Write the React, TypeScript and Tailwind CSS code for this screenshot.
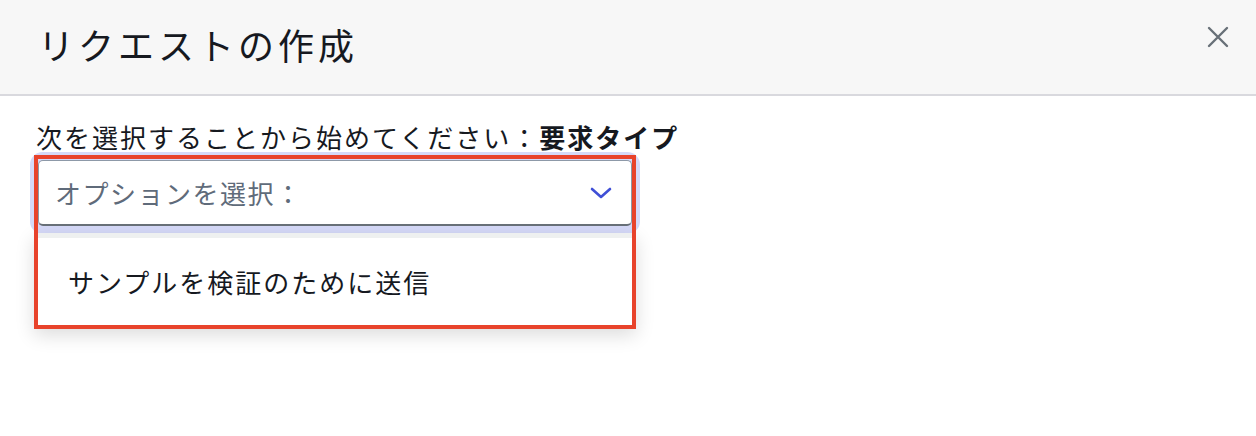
import React from 'react';

export default function App() {
  return (
    <div
      className="w-[1256px] h-[436px] bg-white overflow-hidden"
      style={{ fontFamily: '"Noto Sans CJK JP", "Noto Sans", sans-serif' }}
    >
      <header className="h-[96px] bg-[#f7f7f7] border-b-2 border-[#d9d9de] flex items-center justify-between pl-[38px] pr-[24px]">
        <h2 className="text-[36px] tracking-[4px] leading-none text-[#16191f] font-normal -mt-[6px]">
          リクエストの作成
        </h2>
        <button className="w-[24px] h-[24px] flex items-center justify-center -mt-[20px] mr-[2px] text-[#687078]">
          <svg width="22" height="22" viewBox="0 0 22 22" fill="none" stroke="currentColor" strokeWidth="2.4" strokeLinecap="round">
            <path d="M2 2L20 20M20 2L2 20" />
          </svg>
        </button>
      </header>

      <section className="pt-[24px] pl-[36px]">
        <p className="text-[26px] leading-[34px] tracking-[2px] text-[#16191f]">
          次を選択することから始めてください：<span className="font-bold">要求タイプ</span>
        </p>
      </section>

      <div className="relative ml-[34px] w-[602px] pt-[5px] mt-[1px]">
        <div className="mx-[4px] h-[66px] rounded-[5px] border border-[#8d99a8] border-b-2 border-b-[#687078] bg-white ring-[8px] ring-[#d5d9f8] flex items-center justify-between pl-[16px] pr-[18px]">
          <span className="text-[26px] tracking-[1.5px] text-[#5f6b7a]">オプションを選択：</span>
          <svg width="24" height="16" viewBox="0 0 24 16" fill="none" stroke="#3f4fd6" strokeWidth="2.6" strokeLinecap="round" strokeLinejoin="round">
            <path d="M3 4L12 12L21 4" />
          </svg>
        </div>

        <ul className="mt-[7px] border-t-[5px] border-[#eef0f0] bg-white h-[96px] shadow-[0_6px_18px_rgba(0,0,0,0.14)] flex items-center pl-[34px]">
          <li className="text-[26px] tracking-[2px] text-[#16191f] -mt-[4px]">サンプルを検証のために送信</li>
        </ul>

        <div className="absolute inset-0 border-4 border-[#e8432b] pointer-events-none z-10" />
      </div>
    </div>
  );
}
